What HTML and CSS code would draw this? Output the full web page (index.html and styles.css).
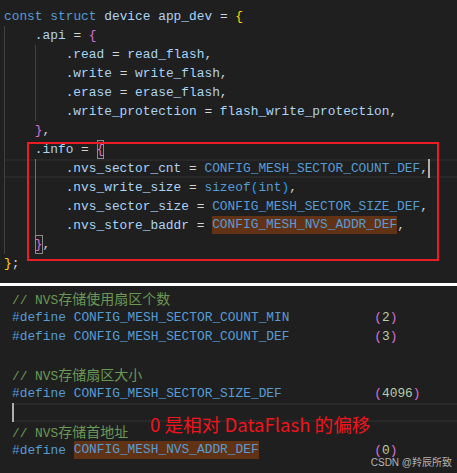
FILE: index.html
```html
<!DOCTYPE html>
<html lang="zh">
<head>
<meta charset="utf-8">
<title>app_dev</title>
<link rel="stylesheet" href="styles.css">
</head>
<body>
<div class="panel top">
<div class="ln"><span class="k">const</span> <span class="k">struct</span> <span class="v">device</span> <span class="v">app_dev</span> <span class="p">=</span> <span class="b1">{</span></div>
<div class="ln"><span class="g"></span><span class="v">.api</span> <span class="p">=</span> <span class="b2">{</span></div>
<div class="ln"><span class="g"></span><span class="g"></span><span class="v">.read</span> <span class="p">=</span> <span class="v">read_flash</span><span class="p">,</span></div>
<div class="ln"><span class="g"></span><span class="g"></span><span class="v">.write</span> <span class="p">=</span> <span class="v">write_flash</span><span class="p">,</span></div>
<div class="ln"><span class="g"></span><span class="g"></span><span class="v">.erase</span> <span class="p">=</span> <span class="v">erase_flash</span><span class="p">,</span></div>
<div class="ln"><span class="g"></span><span class="g"></span><span class="v">.write_protection</span> <span class="p">=</span> <span class="v">flash_write_protection</span><span class="p">,</span></div>
<div class="ln"><span class="g"></span><span class="b2">}</span><span class="p">,</span></div>
<div class="ln"><span class="g"></span><span class="v">.info</span> <span class="p">=</span> <span class="b2 match">{</span></div>
<div class="ln cur"><span class="g"></span><span class="g ga"></span><span class="v">.nvs_sector_cnt</span> <span class="p">=</span> <span class="m">CONFIG_MESH_SECTOR_COUNT_DEF</span><span class="p">,</span><span class="caret"></span></div>
<div class="ln"><span class="g"></span><span class="g ga"></span><span class="v">.nvs_write_size</span> <span class="p">=</span> <span class="k">sizeof</span><span class="b3">(</span><span class="k">int</span><span class="b3">)</span><span class="p">,</span></div>
<div class="ln"><span class="g"></span><span class="g ga"></span><span class="v">.nvs_sector_size</span> <span class="p">=</span> <span class="m">CONFIG_MESH_SECTOR_SIZE_DEF</span><span class="p">,</span></div>
<div class="ln"><span class="g"></span><span class="g ga"></span><span class="v">.nvs_store_baddr</span> <span class="p">=</span> <span class="m hl">CONFIG_MESH_NVS_ADDR_DEF</span><span class="p">,</span></div>
<div class="ln"><span class="g"></span><span class="b2 match">}</span><span class="p">,</span></div>
<div class="ln"><span class="b1">}</span><span class="p">;</span></div>
<div class="redbox"></div>
</div>
<div class="panel bottom">
<div class="ln"><span class="c">// NVS<span class="cj">存储使用扇区个数</span></span></div>
<div class="ln"><span class="k">#define</span> <span class="m">CONFIG_MESH_SECTOR_COUNT_MIN</span>           <span class="b2">(</span><span class="n">2</span><span class="b2">)</span></div>
<div class="ln"><span class="k">#define</span> <span class="m">CONFIG_MESH_SECTOR_COUNT_DEF</span>           <span class="b2">(</span><span class="n">3</span><span class="b2">)</span></div>
<div class="ln"></div>
<div class="ln"><span class="c">// NVS<span class="cj">存储扇区大小</span></span></div>
<div class="ln"><span class="k">#define</span> <span class="m">CONFIG_MESH_SECTOR_SIZE_DEF</span>            <span class="b2">(</span><span class="n">4096</span><span class="b2">)</span></div>
<div class="ln cur"><span class="caret"></span></div>
<div class="ln"><span class="c">// NVS<span class="cj">存储首地址</span></span></div>
<div class="ln"><span class="k">#define</span> <span class="m hl">CONFIG_MESH_NVS_ADDR_DEF</span>               <span class="b2">(</span><span class="n">0</span><span class="b2">)</span></div>
<div class="note">0 是相对 DataFlash 的偏移</div>
<div class="mark">CSDN @羚辰所致</div>
</div>
</body>
</html>
```
FILE: styles.css
```css
html, body {
  margin: 0;
  padding: 0;
}
body {
  width: 457px;
  height: 473px;
  overflow: hidden;
  background: #ffffff;
}
.panel {
  position: relative;
  box-sizing: border-box;
  background: #1f1f1f;
  font-family: "Liberation Mono", "DejaVu Sans Mono", monospace;
  font-size: 12.85px;
  color: #d4d4d4;
  overflow: hidden;
}
.top {
  height: 283px;
  padding: 7px 0 0 4px;
  margin-bottom: 3px;
}
.bottom {
  height: 187px;
  padding: 2.5px 0 0 12px;
}
.ln {
  height: 19px;
  line-height: 19px;
  white-space: pre;
}
.cur {
  box-shadow: inset 0 2px 0 #282828, inset 0 -2px 0 #282828;
}
.g {
  display: inline-block;
  width: 4ch;
  height: 19px;
  vertical-align: top;
  box-shadow: inset 1px 0 0 #404040;
}
.g.ga {
  box-shadow: inset 1px 0 0 #707070;
}
.k { color: #569cd6; }
.m { color: #569cd6; }
.v { color: #acd4f4; }
.p { color: #d4d4d4; }
.c { color: #6a9955; }
.n { color: #b5cea8; }
.b1 { color: #ffd700; }
.b2 { color: #da70d6; }
.b3 { color: #179fff; }
.cj {
  font-family: "Noto Sans CJK SC", sans-serif;
  font-size: 14px;
}
.match {
  display: inline-block;
  height: 19px;
  vertical-align: top;
  box-shadow: inset 0 0 0 1px #8b8b8b;
}
.hl {
  display: inline-block;
  height: 18px;
  line-height: 18px;
  vertical-align: top;
  background: #613214;
}
.caret {
  display: inline-block;
  width: 2px;
  height: 19px;
  vertical-align: top;
  background: #aeafad;
}
.redbox {
  position: absolute;
  left: 27px;
  top: 142px;
  width: 412px;
  height: 119px;
  box-sizing: border-box;
  border: 2px solid #ec1c24;
}
.note {
  position: absolute;
  left: 150px;
  top: 128.5px;
  font-family: "Noto Sans CJK SC", sans-serif;
  font-size: 18.6px;
  line-height: 18px;
  color: #f2141c;
  white-space: nowrap;
}
.mark {
  position: absolute;
  right: 5px;
  bottom: 4px;
  font-family: "Liberation Sans", "Noto Sans CJK SC", sans-serif;
  font-size: 10px;
  line-height: 12px;
  color: #b4b4b4;
  white-space: nowrap;
}
```
